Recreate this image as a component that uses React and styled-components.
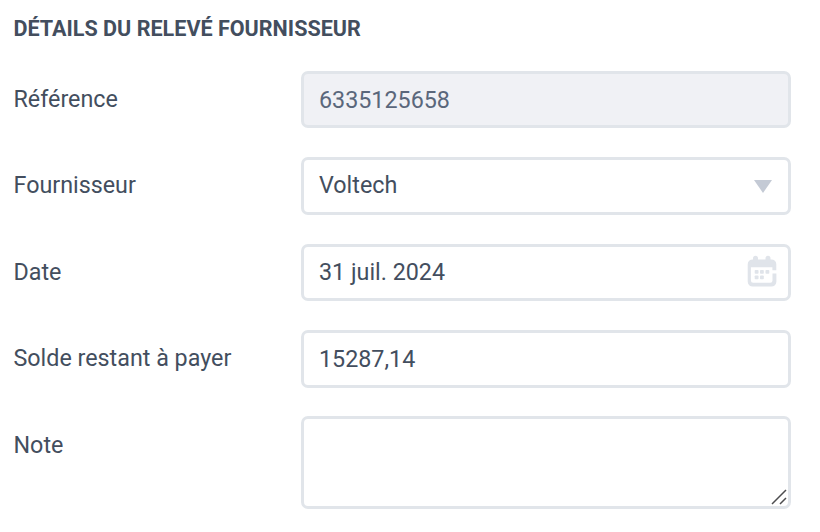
import React from 'react'
import styled, { createGlobalStyle } from 'styled-components'

const GlobalStyle = createGlobalStyle`
    body {
        margin: 0;
        background: #fff;
        color: #434e5e;
        font-family: Roboto, sans-serif;
        font-size: 23.3px;
    }
`

const Panel = styled.div`
    box-sizing: border-box;
    width: 820px;
    height: 532px;
    padding: 15px 29px 0 13.5px;
    overflow: hidden;
`

const Heading = styled.h2`
    margin: 0 0 28px;
    font-size: 21.55px;
    font-weight: 700;
    line-height: 28px;
    white-space: nowrap;
`

const Form = styled.div`
    display: grid;
    grid-template-rows: 86px 87px 86px 86px auto;
`

const Row = styled.div`
    display: flex;
    align-items: flex-start;
`

const Label = styled.div`
    width: 287.5px;
    line-height: ${({ $lineHeight }) => $lineHeight}px;
    white-space: nowrap;
`

const Control = styled.div`
    position: relative;
    box-sizing: border-box;
    display: flex;
    align-items: center;
    justify-content: space-between;
    width: 490px;
    height: ${({ $height }) => $height}px;
    padding: 0 12px 0 15px;
    border: 3px solid #e1e5ea;
    border-radius: 7px;
    background: ${({ $disabled }) => $disabled ? '#f0f1f5' : '#fff'};
    color: ${({ $disabled }) => $disabled ? '#5a677b' : '#434e5e'};
`

const Value = styled.span`
    align-self: flex-start;
    line-height: ${({ $lineHeight }) => $lineHeight}px;
    white-space: nowrap;
`

const Arrow = styled.svg`
    width: 18px;
    height: 13px;
    margin-right: 4px;
`

const Calendar = styled.svg`
    width: 30px;
    height: 32px;
    margin: 0 -1px 3px 0;
`

const Grip = styled.svg`
    position: absolute;
    right: 1px;
    bottom: 1px;
    width: 16px;
    height: 16px;
`

const CalendarIcon = () =>
    <Calendar viewBox="0 0 30 32">
        <path
            fill="#e0e4ea"
            fillRule="evenodd"
            d="M6 3.200a2.500 2.500 0 0 1 5 0v1.200h7.500V3.200a2.500 2.500 0 0 1 5 0v1.200h1a4.800 4.800 0 0 1 4.800 4.800V15.200h-3.900v-3H3.900V25.400a2.300 2.300 0 0 0 2.300 2.300h17a2.300 2.300 0 0 0 2.300-2.300V18.500h3.900v8.100a5 5 0 0 1-5 5H5.700a5 5 0 0 1-5-5V9.400a5 5 0 0 1 5-5H6z"
        />
        <g fill="#e0e4ea">
            <rect x="7.700" y="15" width="3.800" height="3.800" rx=".8" />
            <rect x="13" y="15" width="3.800" height="3.800" rx=".8" />
            <rect x="18.500" y="15" width="3.800" height="3.800" rx=".8" />
            <rect x="7.700" y="20.400" width="3.800" height="3.800" rx=".8" />
            <rect x="13" y="20.400" width="3.800" height="3.800" rx=".8" />
        </g>
    </Calendar>

const ArrowIcon = () =>
    <Arrow viewBox="0 0 18 13">
        <path fill="#c4cad5" d="M0 0h18L9 13z" />
    </Arrow>

const ResizeGrip = () =>
    <Grip viewBox="0 0 16 16">
        <path stroke="#4d4d4f" strokeWidth="1.5" d="M1 15L15 1M9 15l6-6" />
    </Grip>

const Field = ({ label, value, disabled, height = 58, labelHeight = 56, lineHeight = 52, icon }) =>
    <Row>
        <Label $lineHeight={labelHeight}>{label}</Label>
        <Control $disabled={disabled} $height={height}>
            {value && <Value $lineHeight={lineHeight}>{value}</Value>}
            {icon}
        </Control>
    </Row>

const App = () =>
    <>
        <GlobalStyle />
        <Panel>
            <Heading>DÉTAILS DU RELEVÉ FOURNISSEUR</Heading>
            <Form>
                <Field label="Référence" value="6335125658" height={57} disabled />
                <Field label="Fournisseur" value="Voltech" lineHeight={50} icon={<ArrowIcon />} />
                <Field label="Date" value="31 juil. 2024" height={57} lineHeight={50} icon={<CalendarIcon />} />
                <Field label="Solde restant à payer" value="15287,14" />
                <Field label="Note" height={93} labelHeight={58} icon={<ResizeGrip />} />
            </Form>
        </Panel>
    </>

export default App
